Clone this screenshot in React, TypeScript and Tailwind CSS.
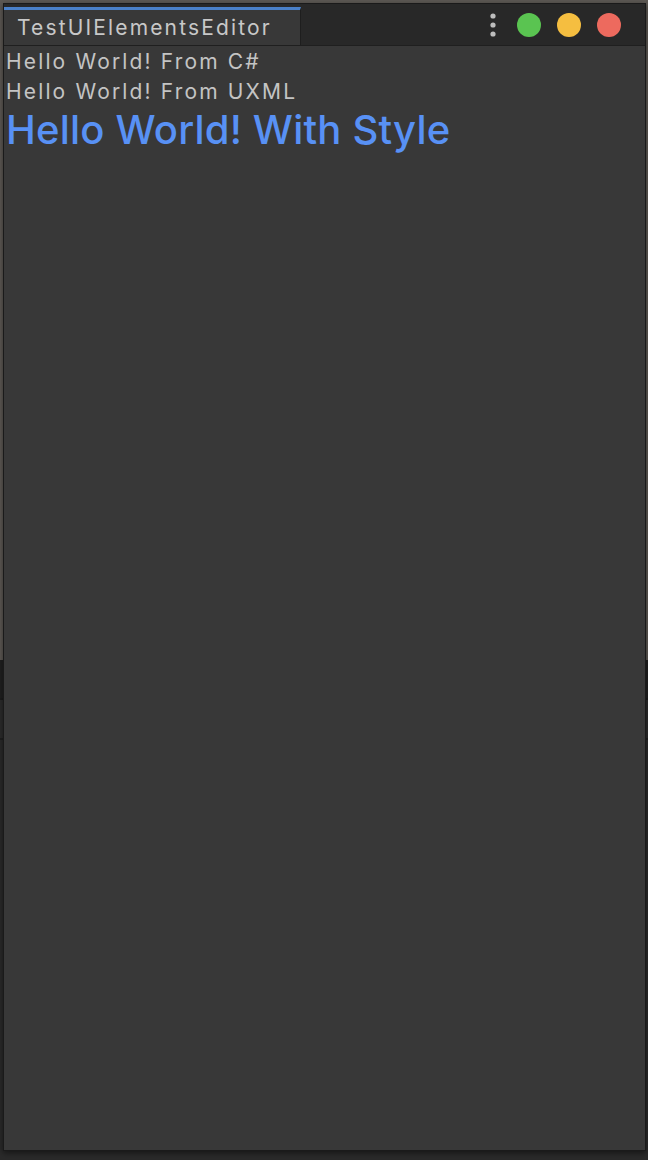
import React from 'react'

function Backdrop() {
  // the editor behind the floating window
  return (
    <div className="flex h-full w-full flex-col">
      <div className="h-[660px] bg-[#5d5954]" />
      <div className="h-[40px] border-b-2 border-[#1c1c1c] bg-[#202020]" />
      <div className="h-[40px] border-b-2 border-[#1f1f1f] bg-[#2b2b2b]" />
      <div className="flex-1 bg-[#2a2a2a]" />
    </div>
  )
}

function WindowDots() {
  return (
    <div className="flex items-center gap-[16px] pr-[24px]">
      <svg width="8" height="26" viewBox="0 0 8 26" className="mr-[4px]">
        <circle cx="4" cy="4" r="2.6" fill="#bdbdbd" />
        <circle cx="4" cy="13" r="2.6" fill="#bdbdbd" />
        <circle cx="4" cy="22" r="2.6" fill="#bdbdbd" />
      </svg>
      <div className="h-[24px] w-[24px] rounded-full bg-[#5ac451]" />
      <div className="h-[24px] w-[24px] rounded-full bg-[#f5be40]" />
      <div className="h-[24px] w-[24px] rounded-full bg-[#ed6a5e]" />
    </div>
  )
}

export default function App() {
  return (
    <div
      className="relative h-[1160px] w-[648px] overflow-hidden"
      style={{ fontFamily: 'Inter, "Noto Sans", sans-serif' }}
    >
      <Backdrop />
      <div className="absolute left-[3px] top-[3px] flex h-[1148px] w-[643px] flex-col border border-[#1a1a1a] bg-[#383838] shadow-[0_2px_6px_rgba(0,0,0,0.5)]">
        <header className="flex h-[42px] shrink-0 items-end justify-between border-b border-[#1f1f1f] bg-[#282828]">
          <div className="flex h-[38px] w-[297px] items-center border-t-[3px] border-r border-t-[#4a80c8] border-r-[#1e1e1e] bg-[#383838] pl-[13px] text-[21px] leading-none tracking-[2.15px] text-[#c8c8c8]">
            TestUIElementsEditor
          </div>
          <div className="flex h-full items-center">
            <WindowDots />
          </div>
        </header>
        <main className="flex flex-col pl-[2px] pt-[1px]">
          <div className="text-[21px] leading-[30px] tracking-[2.15px] text-[#c4c4c4]">Hello World! From C#</div>
          <div className="text-[21px] leading-[30px] tracking-[2.15px] text-[#c4c4c4]">Hello World! From UXML</div>
          <div className="text-[40px] font-medium leading-[46px] tracking-[0.2px] text-[#5891f5]">Hello World! With Style</div>
        </main>
      </div>
    </div>
  )
}
